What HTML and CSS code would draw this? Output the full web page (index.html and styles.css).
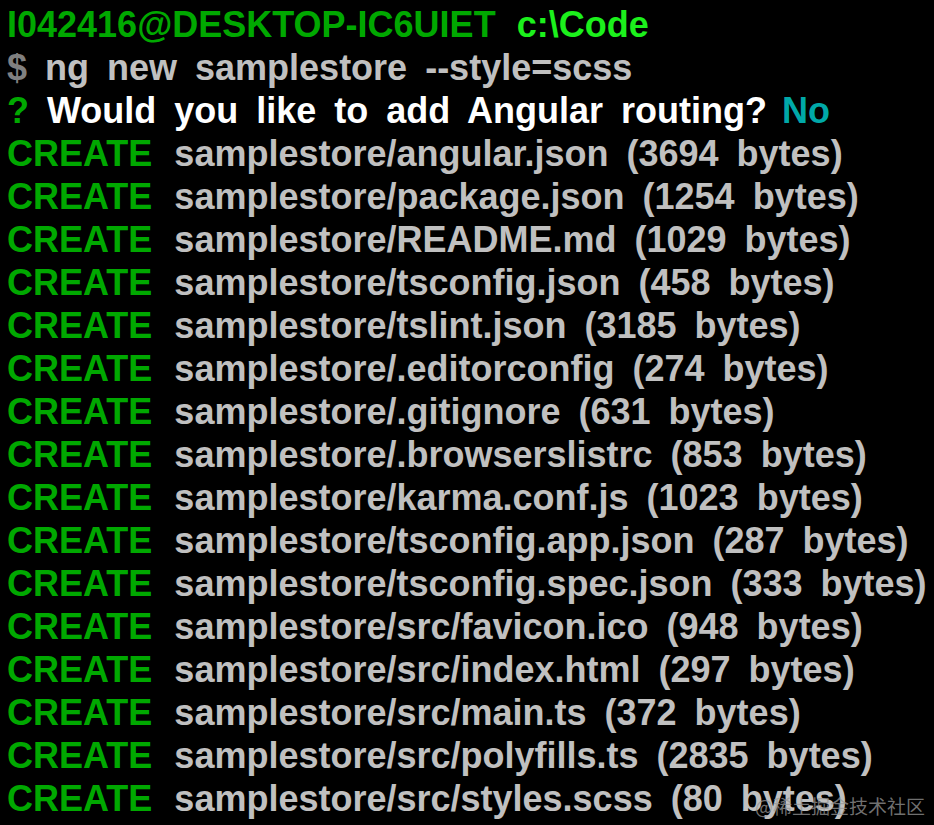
FILE: index.html
```html
<!DOCTYPE html>
<html lang="en">
<head>
<meta charset="utf-8">
<title>Terminal</title>
<link rel="stylesheet" href="styles.css">
</head>
<body>
<main class="term">
  <div class="line prompt"><span class="user">I042416@DESKTOP-IC6UIET</span> <span class="cwd">c:\Code</span></div>
  <div class="line"><span class="dollar">$</span> <span class="cmd">ng new samplestore --style=scss</span></div>
  <div class="line"><span class="q">?</span> <span class="ask">Would you like to add Angular routing?</span> <span class="ans">No</span></div>
  <div class="line"><span class="create">CREATE</span> <span class="file">samplestore/angular.json (3694 bytes)</span></div>
  <div class="line"><span class="create">CREATE</span> <span class="file">samplestore/package.json (1254 bytes)</span></div>
  <div class="line"><span class="create">CREATE</span> <span class="file">samplestore/README.md (1029 bytes)</span></div>
  <div class="line"><span class="create">CREATE</span> <span class="file">samplestore/tsconfig.json (458 bytes)</span></div>
  <div class="line"><span class="create">CREATE</span> <span class="file">samplestore/tslint.json (3185 bytes)</span></div>
  <div class="line"><span class="create">CREATE</span> <span class="file">samplestore/.editorconfig (274 bytes)</span></div>
  <div class="line"><span class="create">CREATE</span> <span class="file">samplestore/.gitignore (631 bytes)</span></div>
  <div class="line"><span class="create">CREATE</span> <span class="file">samplestore/.browserslistrc (853 bytes)</span></div>
  <div class="line"><span class="create">CREATE</span> <span class="file">samplestore/karma.conf.js (1023 bytes)</span></div>
  <div class="line"><span class="create">CREATE</span> <span class="file">samplestore/tsconfig.app.json (287 bytes)</span></div>
  <div class="line"><span class="create">CREATE</span> <span class="file">samplestore/tsconfig.spec.json (333 bytes)</span></div>
  <div class="line"><span class="create">CREATE</span> <span class="file">samplestore/src/favicon.ico (948 bytes)</span></div>
  <div class="line"><span class="create">CREATE</span> <span class="file">samplestore/src/index.html (297 bytes)</span></div>
  <div class="line"><span class="create">CREATE</span> <span class="file">samplestore/src/main.ts (372 bytes)</span></div>
  <div class="line"><span class="create">CREATE</span> <span class="file">samplestore/src/polyfills.ts (2835 bytes)</span></div>
  <div class="line"><span class="create">CREATE</span> <span class="file">samplestore/src/styles.scss (80 bytes)</span></div>
  <div class="watermark">@稀土掘金技术社区</div>
</main>
</body>
</html>
```

FILE: styles.css
```css
html, body {
  margin: 0;
  padding: 0;
  background: #000;
  height: 100%;
  overflow: hidden;
}
.term {
  position: relative;
  height: 100%;
  padding: 3px 0 0 7px;
  box-sizing: border-box;
  font-family: "Liberation Sans", Arial, sans-serif;
  font-size: 36px;
  font-weight: bold;
  line-height: 43px;
  color: #c0c0c0;
  word-spacing: 8px;
}
.line {
  white-space: pre;
}
.user { color: #00a800; margin-right: 3px; }
.cwd { color: #1cf01c; }
.dollar { color: #808080; }
.cmd { color: #c0c0c0; }
.q { color: #00a800; }
.ask { color: #ffffff; }
.ans { color: #00a8a8; margin-left: -3px; }
.create { color: #00a800; margin-right: 4px; }
.file { color: #c0c0c0; }
.watermark {
  position: absolute;
  right: 9px;
  bottom: 8px;
  font-family: "Noto Sans CJK SC", sans-serif;
  font-size: 19px;
  font-weight: normal;
  line-height: 22px;
  word-spacing: 0;
  color: rgba(150, 150, 150, 0.75);
}
```
